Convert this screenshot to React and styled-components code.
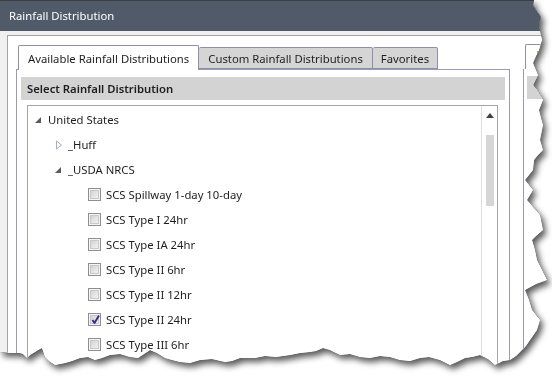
import React from "react";
import styled, { createGlobalStyle } from "styled-components";

const GlobalStyle = createGlobalStyle`
  html, body { margin: 0; padding: 0; background: #ffffff; }
  body { font-family: "Noto Sans", "Open Sans", sans-serif; }
  #root { width: 552px; height: 377px; overflow: hidden; }
`;

const EDGE = [
  [0, 0], [534, 0], [533, 5], [536, 10], [541, 17], [539, 24], [540, 30], [542, 40], [539, 50],
  [536, 56], [533, 63], [538, 75], [533, 85], [537, 90], [540, 95], [543, 100], [539, 110],
  [541, 118], [543, 125], [540, 140], [543, 150], [538, 155], [534, 160], [533, 170], [529, 175],
  [525, 180], [533, 190], [527, 200], [533, 207], [540, 215], [543, 230], [536, 236], [532, 240],
  [535, 250], [537, 260], [542, 270], [547, 280], [536, 284], [525, 290], [529, 300], [532, 310],
  [540, 320], [537, 330], [530, 340], [526, 346], [522, 350], [516, 356], [510, 360], [503, 361],
  [495, 365], [488, 359], [480, 355], [472, 357], [465, 358], [457, 362], [450, 365], [440, 360],
  [429, 357], [420, 358], [410, 361], [400, 360], [390, 357], [380, 356], [370, 358], [360, 357],
  [350, 354], [340, 355], [330, 350], [323, 348], [316, 351], [310, 352], [300, 353], [290, 355],
  [276, 357], [265, 356], [255, 358], [240, 358], [232, 361], [225, 362], [212, 359], [200, 360],
  [190, 363], [180, 362], [172, 360], [165, 358], [157, 353], [150, 350], [144, 354], [138, 358],
  [130, 357], [120, 354], [110, 355], [102, 358], [95, 360], [88, 357], [80, 358], [72, 361],
  [65, 363], [55, 365], [49, 361], [45, 357], [42, 348], [38, 350], [35, 352], [30, 355],
  [27, 358], [23, 354], [20, 353], [10, 353], [0, 352],
];

const clipPath = `polygon(${EDGE.map(([x, y]) => `${x}px ${y}px`).join(", ")})`;

const Shadow = styled.div`
  width: 552px;
  height: 377px;
  filter: drop-shadow(0 0 0.6px #1a1a1a) drop-shadow(3px 4px 3px rgba(0, 0, 0, 0.65));
`;

const Torn = styled.div`
  width: 552px;
  height: 377px;
  background: #f0f0f0;
  display: flex;
  flex-direction: column;
  overflow: hidden;
`;

const TitleBar = styled.div`
  height: 30px;
  flex: none;
  background: #505a68;
  border-top: 1px solid #3a3f46;
  display: flex;
  align-items: center;
  padding-left: 9px;
  padding-bottom: 1px;
  box-sizing: border-box;
  height: 31px;
  color: #ffffff;
  font-size: 11.3px;
`;

const Body = styled.div`
  flex: 1;
  padding: 4px 0 0 7px;
  display: flex;
  min-height: 0;
`;

const Frame = styled.div`
  flex: 1;
  background: #ffffff;
  border-top: 1px solid #a3a3a3;
  border-left: 1px solid #a3a3a3;
  padding: 9px 0 0 8px;
  display: flex;
  gap: 13px;
  min-height: 0;
`;

const TabControl = styled.div`
  width: ${(p) => p.$width}px;
  flex: none;
  display: flex;
  flex-direction: column;
`;

const TabStrip = styled.div`
  height: 24px;
  display: flex;
  align-items: flex-end;
  padding-left: 2px;
  position: relative;
  z-index: 1;
`;

const Tab = styled.div`
  box-sizing: border-box;
  padding: 0 ${(p) => p.$pad}px;
  border: 1px solid #8e8ea8;
  border-bottom: ${(p) => (p.$active ? "none" : "1px solid #8e8ea8")};
  border-left: ${(p) => (p.$first ? "1px solid #8e8ea8" : "none")};
  border-radius: 2px 2px 0 0;
  background: ${(p) => (p.$active ? "#ffffff" : "#d5d5d5")};
  margin-bottom: ${(p) => (p.$active ? "-1px" : "0")};
  height: ${(p) => (p.$active ? 25 : 22)}px;
  display: flex;
  align-items: center;
  font-size: 11.3px;
  color: #1e1e1e;
  white-space: nowrap;
`;

const Panel = styled.div`
  flex: 1;
  border: 1px solid #9a9ab4;
  border-bottom: none;
  padding: 7px 4px 0 4px;
  display: flex;
  flex-direction: column;
  gap: 5px;
  min-height: 0;
`;

const Header = styled.div`
  height: 23px;
  flex: none;
  background: #d3d3d3;
  display: flex;
  align-items: center;
  padding-left: 6px;
  font-size: 11.3px;
  font-weight: 600;
  color: #1e1e1e;
  white-space: nowrap;
  overflow: hidden;
`;

const TreeBox = styled.div`
  flex: 1;
  margin: 0 7px 0 6px;
  border: 1px solid #a6a6a6;
  border-bottom: none;
  display: flex;
  min-height: 0;
`;

const TreeList = styled.div`
  flex: 1;
  padding-top: 1px;
  display: flex;
  flex-direction: column;
`;

const Row = styled.div`
  height: 25px;
  flex: none;
  display: flex;
  align-items: center;
  padding-left: ${(p) => 6 + p.$level * 20}px;
  font-size: 11.3px;
  color: #1e1e1e;
  white-space: nowrap;
`;

const Expander = styled.span`
  width: 14px;
  height: 14px;
  flex: none;
  display: flex;
  align-items: center;
`;

const Label = styled.span`
  margin-left: ${(p) => p.$gap || 0}px;
`;

const Check = styled.span`
  width: 13px;
  height: 13px;
  box-sizing: border-box;
  flex: none;
  border: 1px solid #8f8f8f;
  background: #f4f4f4;
  padding: 1px;
  display: flex;
  position: relative;
  &::before {
    content: "";
    flex: 1;
    background: linear-gradient(135deg, #d2d2d2 0%, #e6e6e6 60%, #f0f0f0 100%);
    border: 1px solid #c9c9c9;
  }
  svg {
    position: absolute;
    left: 1px;
    top: 0px;
  }
`;

const ScrollBar = styled.div`
  width: 15px;
  flex: none;
  border-left: 1px solid #dedede;
  display: flex;
  flex-direction: column;
  align-items: center;
  padding-top: 7px;
`;

const Thumb = styled.div`
  width: 8px;
  height: 71px;
  margin-top: 17px;
  background: #d6d6d6;
`;

const SidePanel = styled.div`
  flex: 1;
  display: flex;
  flex-direction: column;
`;

const SideTab = styled.div`
  margin-left: 2px;
  border: 1px solid #8e8ea8;
  border-right: none;
  border-bottom: none;
  border-radius: 2px 0 0 0;
  box-sizing: border-box;
  margin-top: -1px;
  height: 25px;
  padding: 6px 0 0 11px;
`;

const SideTabMark = styled.div`
  width: 2px;
  height: 7px;
  background: #d99a3a;
`;

const SidePanelBody = styled.div`
  flex: 1;
  border-left: 1px solid #9a9ab4;
  padding: 7px 0 0 3px;
`;

const SideHeader = styled.div`
  height: 23px;
  background: #d3d3d3;
`;

const ExpandedArrow = () => (
  <svg width="8" height="8" viewBox="0 0 8 8">
    <polygon points="7,1 7,7 1,7" fill="#5a5a5a" />
  </svg>
);

const CollapsedArrow = () => (
  <svg width="8" height="10" viewBox="0 0 8 10" style={{ marginLeft: 1 }}>
    <polygon points="1.5,1 6.5,5 1.5,9" fill="none" stroke="#9fb0c8" strokeWidth="1" />
  </svg>
);

const CheckMark = () => (
  <svg width="11" height="11" viewBox="0 0 11 11">
    <path d="M2.5 6 L4.5 9 L9 1.5" fill="none" stroke="#2b2f8a" strokeWidth="1.9" strokeLinejoin="round" />
  </svg>
);

const items = [
  { label: "SCS Spillway 1-day 10-day" },
  { label: "SCS Type I 24hr" },
  { label: "SCS Type IA 24hr" },
  { label: "SCS Type II 6hr" },
  { label: "SCS Type II 12hr" },
  { label: "SCS Type II 24hr", checked: true },
  { label: "SCS Type III 6hr" },
];

export default function App() {
  return (
    <>
      <GlobalStyle />
      <Shadow>
        <Torn style={{ clipPath }}>
          <TitleBar>Rainfall Distribution</TitleBar>
          <Body>
            <Frame>
              <TabControl $width={494}>
                <TabStrip>
                  <Tab $active $first $pad={9}>Available Rainfall Distributions</Tab>
                  <Tab $pad={9}>Custom Rainfall Distributions</Tab>
                  <Tab $pad={8}>Favorites</Tab>
                </TabStrip>
                <Panel>
                  <Header>Select Rainfall Distribution</Header>
                  <TreeBox>
                    <TreeList>
                      <Row $level={0}>
                        <Expander><ExpandedArrow /></Expander>
                        <Label>United States</Label>
                      </Row>
                      <Row $level={1}>
                        <Expander><CollapsedArrow /></Expander>
                        <Label>_Huff</Label>
                      </Row>
                      <Row $level={1}>
                        <Expander><ExpandedArrow /></Expander>
                        <Label>_USDA NRCS</Label>
                      </Row>
                      {items.map((it) => (
                        <Row key={it.label} $level={2}>
                          <Expander />
                          <Check>{it.checked && <CheckMark />}</Check>
                          <Label $gap={5}>{it.label}</Label>
                        </Row>
                      ))}
                    </TreeList>
                    <ScrollBar>
                      <svg width="8" height="5" viewBox="0 0 8 5">
                        <polygon points="0,5 4,0 8,5" fill="#404040" />
                      </svg>
                      <Thumb />
                    </ScrollBar>
                  </TreeBox>
                </Panel>
              </TabControl>
              <SidePanel>
                <SideTab>
                  <SideTabMark />
                </SideTab>
                <SidePanelBody>
                  <SideHeader />
                </SidePanelBody>
              </SidePanel>
            </Frame>
          </Body>
        </Torn>
      </Shadow>
    </>
  );
}
